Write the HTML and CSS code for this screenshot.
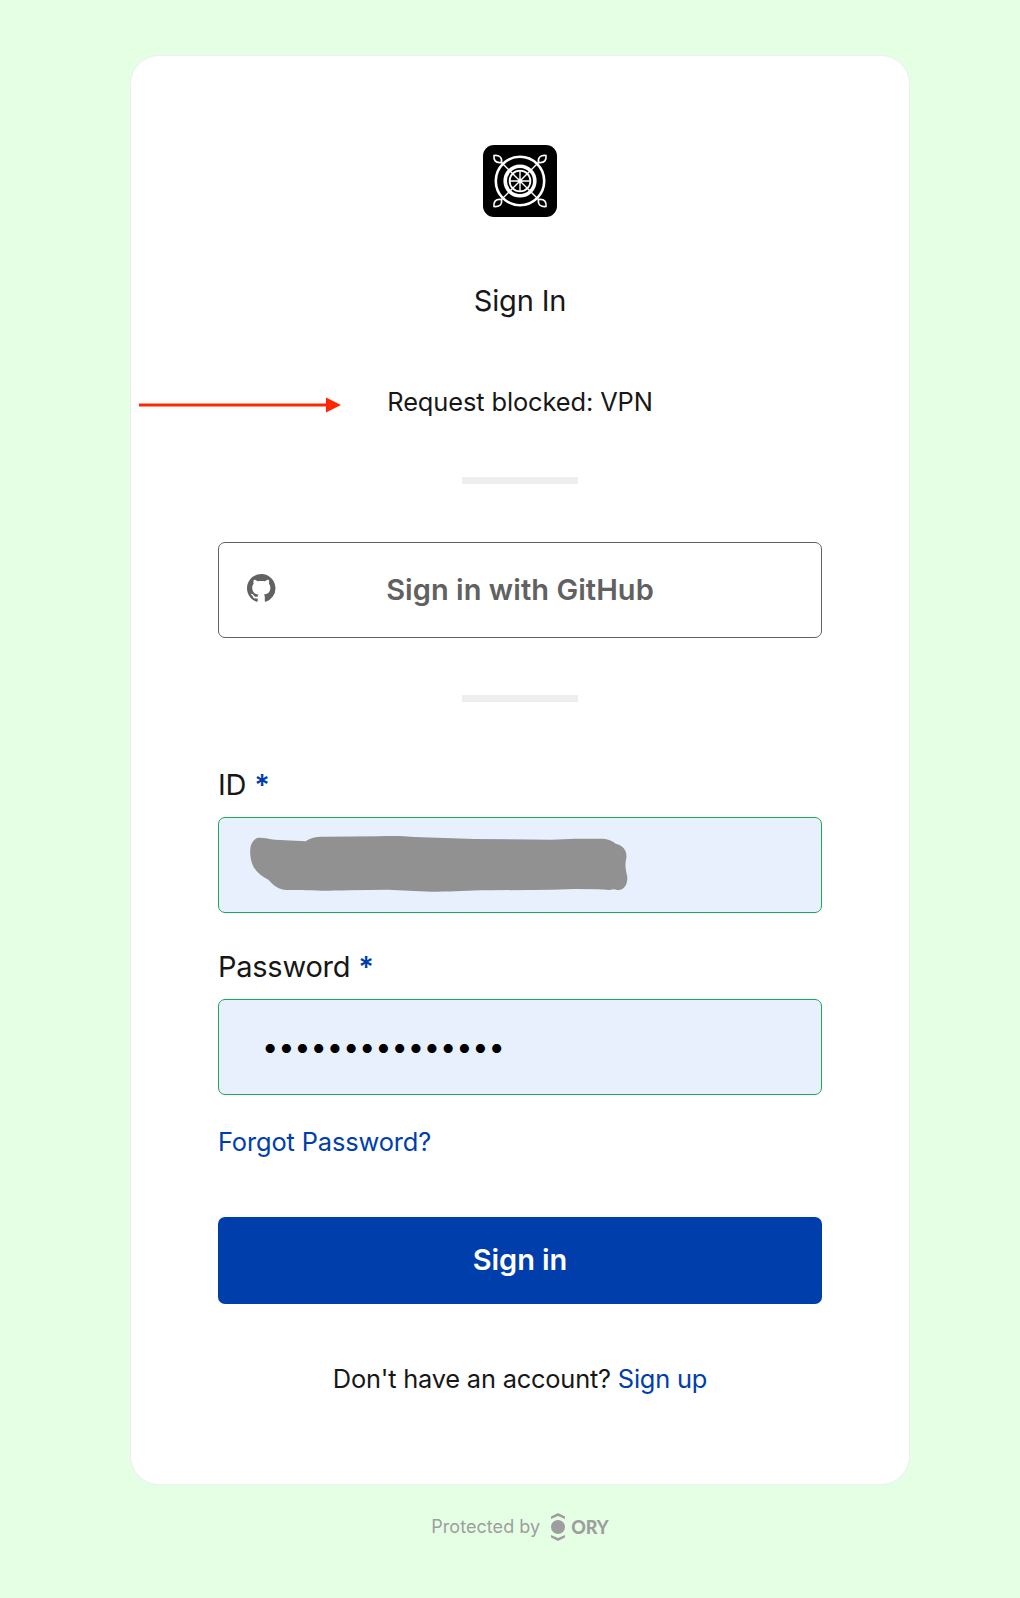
FILE: index.html
```html
<!DOCTYPE html>
<html lang="en">
<head>
<meta charset="utf-8">
<title>Sign In</title>
<link rel="stylesheet" href="styles.css">
</head>
<body>
<main class="card">
  <svg class="logo" viewBox="0 0 74 72" aria-hidden="true">
    <rect width="74" height="72" rx="11" fill="#000"/>
    <g fill="none" stroke="#fff">
      <circle cx="37" cy="36" r="24.2" stroke-width="2.6"/>
      <circle cx="37" cy="36" r="14.8" stroke-width="3.6"/>
      <circle cx="37" cy="36" r="10.4" stroke-width="1.8"/>
      <path stroke-width="1.4" d="M37 25v22M26 36h22M17 16l40 40M57 16L17 56"/>
      <g stroke-width="1.6" fill="#000">
        <path d="M18.500 17.500C12 18.500 10.500 14.500 11 10.500C16 10 19.500 12 18.500 17.500Z"/>
        <path d="M55.500 17.500C62 18.500 63.500 14.500 63 10.500C58 10 54.500 12 55.500 17.500Z"/>
        <path d="M18.500 54.500C12 53.500 10.500 57.500 11 61.500C16 62 19.500 60 18.500 54.500Z"/>
        <path d="M55.500 54.500C62 53.500 63.500 57.500 63 61.500C58 62 54.500 60 55.500 54.500Z"/>
      </g>
    </g>
    <circle cx="37" cy="36" r="2.400" fill="#fff"/>
  </svg>
  <h1 class="title">Sign In</h1>
  <p class="message"><span class="message-text">Request blocked: VPN</span>
    <svg class="arrow" viewBox="0 0 202 16" aria-hidden="true"><path fill="#ff2600" d="M0 6.500h187V.5l15 7.500-15 7.500V9.500H0z"/></svg>
  </p>
  <hr class="divider">
  <button class="social" type="button">
    <svg class="github" viewBox="0 0 16 16" aria-hidden="true"><path fill="currentColor" d="M8 0C3.580 0 0 3.580 0 8c0 3.540 2.290 6.530 5.470 7.590.4.070.55-.17.55-.38 0-.19-.01-.82-.01-1.490-2.010.37-2.530-.49-2.690-.94-.09-.23-.48-.94-.82-1.130-.28-.15-.68-.52-.01-.53.63-.01 1.080.58 1.230.82.72 1.210 1.870.87 2.330.66.07-.52.28-.87.51-1.070-1.780-.2-3.640-.89-3.640-3.950 0-.87.31-1.590.82-2.150-.08-.2-.36-1.020.08-2.120 0 0 .67-.21 2.200.82.64-.18 1.320-.27 2-.27s1.360.09 2 .27c1.530-1.040 2.200-.82 2.200-.82.44 1.100.16 1.920.08 2.120.51.56.82 1.270.82 2.150 0 3.070-1.870 3.750-3.650 3.950.29.25.54.73.54 1.480 0 1.070-.01 1.930-.01 2.200 0 .21.15.46.55.38A8.010 8.010 0 0 0 16 8c0-4.420-3.580-8-8-8z"/></svg>
    <span class="social-text">Sign in with GitHub</span>
  </button>
  <hr class="divider">
  <form class="form">
    <label class="label" for="id">ID <span class="required">*</span></label>
    <div class="field">
      <input class="input" id="id" type="text">
      <svg class="scribble" viewBox="39 171 1812 288" aria-hidden="true"><path fill="#919191" d="M156 234C175 231 190 238 210 239L302 244C315 234 332 230 355 230L520 229C570 226 610 229 650 232L810 237L1040 239L1110 236H1185C1208 236 1220 241 1232 251C1258 257 1266 274 1264 294C1258 320 1264 332 1267 352C1267 374 1258 390 1241 390C1234 391 1231 386 1225 388C1213 392 1200 389 1180 388L1110 387L1040 389L850 391C780 391 740 396 680 395C630 394 590 390 550 389L430 391C350 394 300 390 245 390C220 388 208 378 190 359C160 345 138 322 136 285C134 258 139 244 156 234Z"/></svg>
    </div>
    <label class="label label-next" for="password">Password <span class="required">*</span></label>
    <div class="field">
      <input class="input password" id="password" type="password" value="hunter2hunter22">
    </div>
    <a class="link forgot">Forgot Password?</a>
    <button class="submit" type="button">Sign in</button>
  </form>
  <p class="signup">Don't have an account? <a class="link">Sign up</a></p>
</main>
<footer class="footer">
  <span class="protected">Protected by</span>
  <svg class="eye" viewBox="0 0 14 30" aria-hidden="true"><g fill="#9e9e9e"><circle cx="7" cy="15" r="7"/><path d="M0 4.500L7 1l7 3.500V7L7 4 0 7zM0 23l7 3 7-3v2.500L7 29l-7-3.500z"/></g></svg>
  <span class="brand">ORY</span>
</footer>
</body>
</html>
```
FILE: styles.css
```css
* { box-sizing: border-box; }
body {
  margin: 0;
  padding: 55px 0 0 20px;
  min-height: 1598px;
  background: #e5ffe5;
  color: #171717;
  font-family: Inter, "Liberation Sans", sans-serif;
  font-size: 29px;
  line-height: 40px;
}
.card {
  display: flex;
  flex-direction: column;
  align-items: center;
  width: 780px;
  height: 1430px;
  margin: 0 auto;
  padding: 88px 87px 80px;
  background: #fff;
  border: 1px solid #eee;
  border-radius: 29px;
}
.card > * { flex-shrink: 0; }
.logo { width: 74px; height: 72px; margin-top: 1px; }
.title { margin: 64px 0 0; font-size: 29px; font-weight: 400; letter-spacing: -0.15px; }
.message { position: relative; width: 100%; margin: 63px 0 0; text-align: center; font-size: 25.4px; line-height: 36px; letter-spacing: -0.1px; }
.arrow { position: absolute; left: -79px; top: 13px; width: 202px; height: 16px; }
.divider { width: 116px; height: 7px; margin: 57px 0 0; border: 0; background: #eee; }
.social {
  display: grid;
  grid-template-columns: 28px 1fr 28px;
  align-items: center;
  width: 604px;
  height: 96px;
  margin: 58px 0 0;
  padding: 0 28px;
  background: #fff;
  border: 1px solid #616161;
  border-radius: 7px;
  color: #616161;
  font: 600 29px/40px Inter, "Liberation Sans", sans-serif;
  letter-spacing: 0.05px;
}
.github { width: 28.5px; height: 28.5px; margin-bottom: 4px; }
.form { display: flex; flex-direction: column; width: 604px; margin-top: 63px; }
.label { margin-bottom: 12px; letter-spacing: -0.25px; }
.label-next { margin-top: 34px; }
.required, .link { color: #003eab; }
.required { font-weight: 600; }
.field { position: relative; height: 96px; }
.input {
  display: block;
  width: 100%;
  height: 96px;
  padding: 0 43px;
  border: 1px solid #18a957;
  border-radius: 7px;
  background: #e8f0fe;
  color: #000;
  font: 29px Inter, "Liberation Sans", sans-serif;
}
.password { padding-bottom: 2px; letter-spacing: -0.13px; }
.scribble { position: absolute; left: 0; top: 0; width: 604px; height: 96px; }
.forgot { margin-top: 29px; font-size: 25.4px; line-height: 36px; letter-spacing: -0.12px; }
.submit {
  height: 87px;
  margin: 57px 0 0;
  padding: 0 0 2px;
  border: 0;
  border-radius: 7px;
  background: #003eab;
  color: #fff;
  font: 600 29px/40px Inter, "Liberation Sans", sans-serif;
  letter-spacing: -0.1px;
}
.signup { margin: 57px 0 0; font-size: 25.4px; line-height: 36px; letter-spacing: -0.2px; }
.footer { display: flex; align-items: center; justify-content: center; margin-top: 27px; height: 30px; color: #9e9e9e; }
.protected { font-size: 18px; line-height: 30px; letter-spacing: 0.05px; }
.eye { width: 14px; height: 30px; margin: 0 6px 0 11px; }
.brand { font: 900 18px/30px Lato, sans-serif; }
```
